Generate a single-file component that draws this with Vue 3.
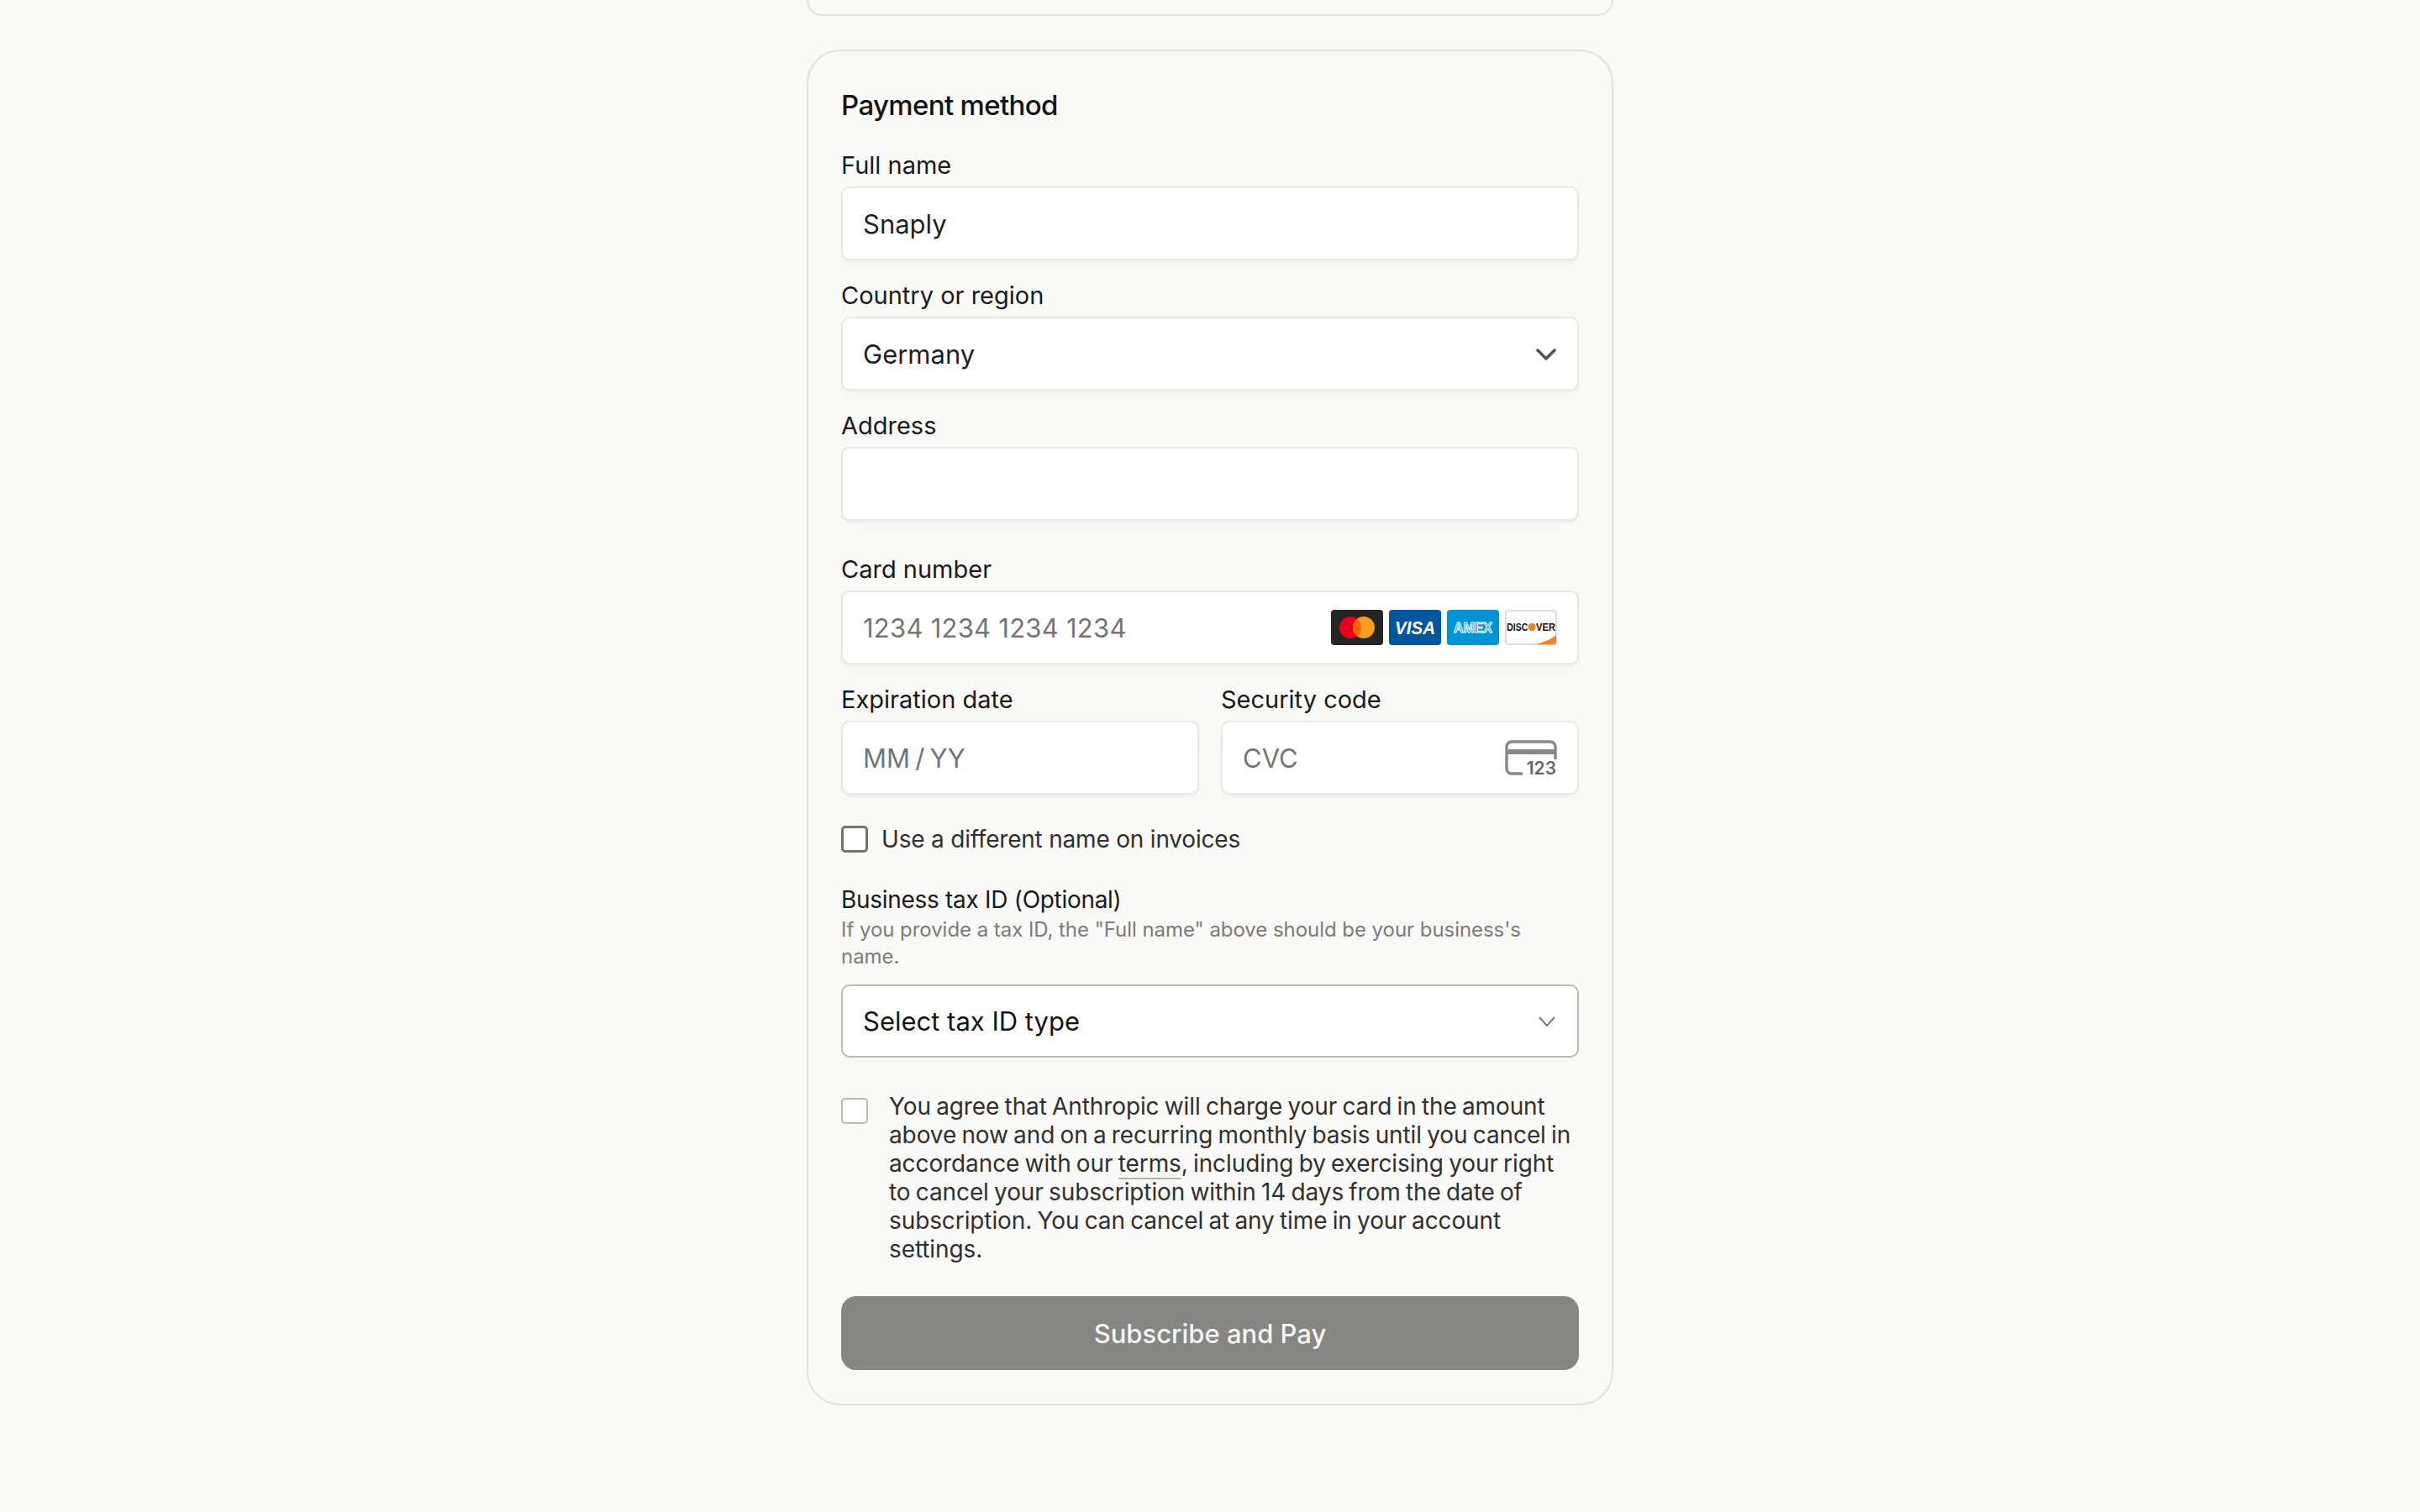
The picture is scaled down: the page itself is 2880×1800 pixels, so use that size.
<template>
  <div class="page">
    <div class="prev-card"></div>
    <form class="card" @submit.prevent>
      <h2 class="title">Payment method</h2>

      <div class="stack">
        <div class="field">
          <div class="label">Full name</div>
          <div class="input"><span>Snaply</span></div>
        </div>
        <div class="field">
          <div class="label">Country or region</div>
          <div class="input">
            <span>Germany</span>
            <svg class="chevron country-chevron" width="24" height="14" viewBox="0 0 24 14">
              <path d="M2 2l10 10L22 2" fill="none" stroke="#555" stroke-width="3.6" stroke-linecap="round" stroke-linejoin="round" />
            </svg>
          </div>
        </div>
        <div class="field">
          <div class="label">Address</div>
          <div class="input"></div>
        </div>
      </div>

      <div class="stack card-fields">
        <div class="field">
          <div class="label">Card number</div>
          <div class="input placeholder">
            <span class="card-number">1234 1234 1234 1234</span>
            <div class="brands">
              <svg width="62" height="42" viewBox="0 0 62 42">
                <rect width="62" height="42" rx="4" fill="#252525" />
                <circle cx="23" cy="21" r="13" fill="#eb001b" />
                <circle cx="39" cy="21" r="13" fill="#f79e1b" />
                <path d="M31 10.800a13 13 0 0 1 0 20.400a13 13 0 0 1 0-20.400z" fill="#ff5f00" />
              </svg>
              <svg width="62" height="42" viewBox="0 0 62 42">
                <rect width="62" height="42" rx="4" fill="#00579f" />
                <text x="7" y="28.700" class="visa" textLength="48" lengthAdjust="spacingAndGlyphs">VISA</text>
              </svg>
              <svg width="62" height="42" viewBox="0 0 62 42">
                <rect width="62" height="42" rx="4" fill="#0193d3" />
                <text x="8" y="26.500" class="amex" textLength="46" lengthAdjust="spacingAndGlyphs">AMEX</text>
              </svg>
              <svg width="62" height="42" viewBox="0 0 62 42">
                <rect x="1" y="1" width="60" height="40" rx="3" fill="#fff" stroke="#ddd" stroke-width="2" />
                <path d="M35 41c11-2 20-6 26-11v8a3 3 0 0 1-3 3z" fill="#f58220" />
                <text x="2.300" y="24.600" class="discover" textLength="25" lengthAdjust="spacingAndGlyphs">DISC</text>
                <circle cx="32" cy="20.500" r="4.500" fill="#f58220" />
                <text x="37" y="24.600" class="discover" textLength="23" lengthAdjust="spacingAndGlyphs">VER</text>
              </svg>
            </div>
          </div>
        </div>
        <div class="row">
          <div class="field">
            <div class="label">Expiration date</div>
            <div class="input placeholder"><span class="expiry">MM / YY</span></div>
          </div>
          <div class="field">
            <div class="label">Security code</div>
            <div class="input placeholder">
              <span>CVC</span>
              <svg class="cvc-icon" width="62" height="42" viewBox="0 0 62 42">
                <path d="M21 40H8a6 6 0 0 1-6-6V8a6 6 0 0 1 6-6h46a6 6 0 0 1 6 6v15" fill="none" stroke="#888" stroke-width="3.400" />
                <rect x="2" y="11" width="58" height="6" fill="#888" />
                <text x="61" y="41" class="cvc-num">123</text>
              </svg>
            </div>
          </div>
        </div>
      </div>

      <label class="check-row">
        <span class="box"></span>
        <span>Use a different name on invoices</span>
      </label>

      <div class="tax">
        <div class="tax-label">Business tax ID (Optional)</div>
        <p class="hint">If you provide a tax ID, the "Full name" above should be your business's name.</p>
        <div class="select">
          <span>Select tax ID type</span>
          <svg class="chevron" width="20" height="12" viewBox="0 0 20 12">
            <path d="M1 1l9 10 9-10" fill="none" stroke="#777" stroke-width="2" />
          </svg>
        </div>
      </div>

      <div class="agree">
        <span class="box light"></span>
        <p class="agree-text">
          You agree that Anthropic will charge your card in the amount above now and on a recurring monthly basis until you cancel in accordance with our <a class="terms">terms</a>, including by exercising your right to cancel your subscription within 14 days from the date of subscription. You can cancel at any time in your account settings.
        </p>
      </div>

      <button class="submit" type="submit">Subscribe and Pay</button>
    </form>
  </div>
</template>

<script setup>
</script>

<style>
body {
  background: #f9f9f7;
}
</style>

<style scoped>
.page {
  width: 960px;
  margin: 0 auto;
  font-family: Inter, "Liberation Sans", sans-serif;
  color: #1a1a18;
}

.prev-card {
  height: 19px;
  border: 2px solid #e0e0dc;
  border-top: none;
  border-radius: 0 0 24px 24px;
  box-sizing: border-box;
}

.card {
  margin-top: 40px;
  padding: 0 39px 40px;
  box-sizing: border-box;
  border: 2px solid #e0e0dc;
  border-radius: 40px;
}

.title {
  margin: 42px 0 0;
  font-size: 33px;
  line-height: 44px;
  font-weight: 500;
  letter-spacing: -0.65px;
  color: #141413;
}

.stack {
  display: flex;
  flex-direction: column;
  gap: 24px;
  margin-top: 32px;
}

.card-fields {
  margin-top: 40px;
}

.field {
  display: flex;
  flex-direction: column;
  flex: 1;
  min-width: 0;
}

.row {
  display: flex;
  gap: 26px;
}

.label {
  margin-bottom: 7px;
  font-size: 29px;
  line-height: 36px;
}

.input {
  display: flex;
  align-items: center;
  justify-content: space-between;
  box-sizing: border-box;
  height: 88px;
  padding: 0 24px;
  background: #fff;
  border: 2px solid #e8e8e6;
  border-radius: 10px;
  box-shadow: 0 2px 2px rgba(0, 0, 0, 0.03), 0 6px 12px rgba(0, 0, 0, 0.02);
  font-size: 31px;
  color: #1f1f1e;
}

.placeholder {
  color: #757575;
}

.card-number {
  letter-spacing: 0.25px;
}

.expiry {
  word-spacing: -2.500px;
}

.brands {
  display: flex;
  gap: 7px;
}

.brands svg,
.chevron,
.cvc-icon {
  display: block;
  flex: none;
}

.country-chevron {
  margin: 2px 1px 0 0;
}

.visa {
  font: italic 700 22px "Liberation Sans", sans-serif;
  fill: #fff;
}

.amex {
  font: 700 16px "Liberation Sans", sans-serif;
  fill: #0193d3;
  stroke: #fff;
  stroke-width: 1px;
}

.discover {
  font: 700 13px "Liberation Sans", sans-serif;
  fill: #111;
}

.cvc-num {
  font: 600 21px Inter, sans-serif;
  fill: #666;
  text-anchor: end;
}

.check-row {
  display: flex;
  align-items: center;
  gap: 16px;
  margin-top: 36px;
  font-size: 28px;
  line-height: 34px;
  letter-spacing: -0.2px;
  color: #30302e;
}

.box {
  flex: none;
  box-sizing: border-box;
  width: 32px;
  height: 32px;
  background: #fff;
  border: 3px solid #73726f;
  border-radius: 5px;
}

.box.light {
  height: 31px;
  border: 2px solid #b8b8b4;
  margin-top: 7px;
}

.tax {
  margin-top: 36px;
}

.tax-label {
  font-size: 28px;
  line-height: 38px;
  letter-spacing: -0.3px;
}

.hint {
  margin: 1px 0 0;
  font-size: 24px;
  line-height: 32px;
  letter-spacing: -0.05px;
  color: #7b7b78;
}

.select {
  display: flex;
  align-items: center;
  justify-content: space-between;
  box-sizing: border-box;
  height: 87px;
  margin-top: 17px;
  padding: 0 26px 0 24px;
  background: #fff;
  border: 2px solid #b9b9b6;
  border-radius: 10px;
  font-size: 31px;
  color: #141413;
}

.agree {
  display: flex;
  gap: 25px;
  margin-top: 41px;
}

.agree-text {
  flex: 1;
  margin: 0;
  font-size: 28px;
  line-height: 34px;
  letter-spacing: -0.1px;
  word-spacing: -1.500px;
  color: #30302e;
}

.terms {
  border-bottom: 2px solid #b5b5b0;
}

.submit {
  display: block;
  width: 100%;
  height: 88px;
  margin-top: 39px;
  border: none;
  border-radius: 18px;
  background: #868685;
  color: #f5f5f2;
  font-family: inherit;
  font-size: 31px;
  font-weight: 500;
}
</style>
